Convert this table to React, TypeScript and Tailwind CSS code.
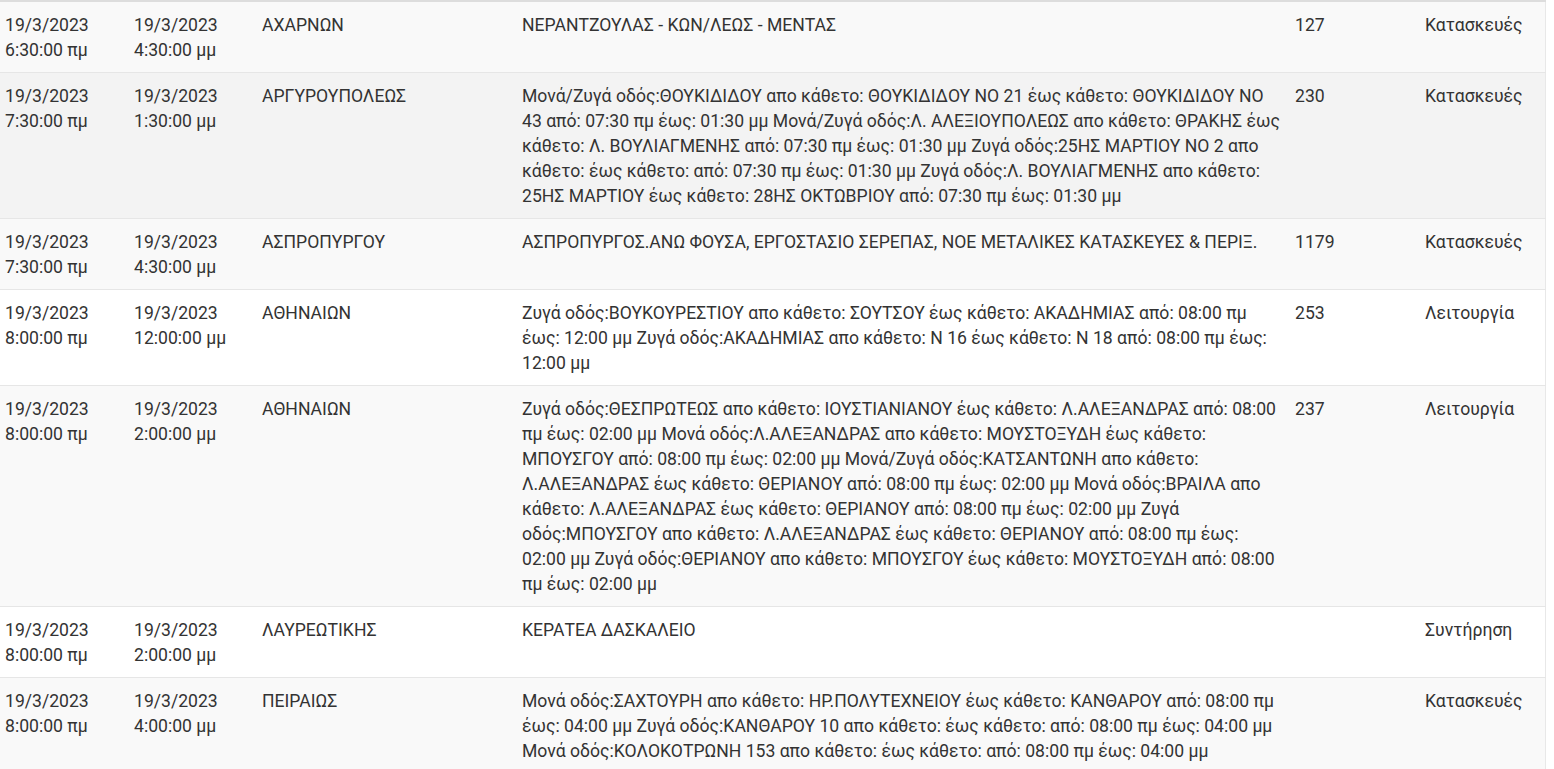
const rows = [
  {
    start: ["19/3/2023", "6:30:00 πμ"],
    end: ["19/3/2023", "4:30:00 μμ"],
    area: "ΑΧΑΡΝΩΝ",
    desc: "ΝΕΡΑΝΤΖΟΥΛΑΣ - ΚΩΝ/ΛΕΩΣ - ΜΕΝΤΑΣ",
    num: "127",
    type: "Κατασκευές",
  },
  {
    start: ["19/3/2023", "7:30:00 πμ"],
    end: ["19/3/2023", "1:30:00 μμ"],
    area: "ΑΡΓΥΡΟΥΠΟΛΕΩΣ",
    desc: "Μονά/Ζυγά οδός:ΘΟΥΚΙΔΙΔΟΥ απο κάθετο: ΘΟΥΚΙΔΙΔΟΥ ΝΟ 21 έως κάθετο: ΘΟΥΚΙΔΙΔΟΥ ΝΟ 43 από: 07:30 πμ έως: 01:30 μμ Μονά/Ζυγά οδός:Λ. ΑΛΕΞΙΟΥΠΟΛΕΩΣ απο κάθετο: ΘΡΑΚΗΣ έως κάθετο: Λ. ΒΟΥΛΙΑΓΜΕΝΗΣ από: 07:30 πμ έως: 01:30 μμ Ζυγά οδός:25ΗΣ ΜΑΡΤΙΟΥ ΝΟ 2 απο κάθετο: έως κάθετο: από: 07:30 πμ έως: 01:30 μμ Ζυγά οδός:Λ. ΒΟΥΛΙΑΓΜΕΝΗΣ απο κάθετο: 25ΗΣ ΜΑΡΤΙΟΥ έως κάθετο: 28ΗΣ ΟΚΤΩΒΡΙΟΥ από: 07:30 πμ έως: 01:30 μμ",
    num: "230",
    type: "Κατασκευές",
    hover: true,
  },
  {
    start: ["19/3/2023", "7:30:00 πμ"],
    end: ["19/3/2023", "4:30:00 μμ"],
    area: "ΑΣΠΡΟΠΥΡΓΟΥ",
    desc: "ΑΣΠΡΟΠΥΡΓΟΣ.ΑΝΩ ΦΟΥΣΑ, ΕΡΓΟΣΤΑΣΙΟ ΣΕΡΕΠΑΣ, ΝΟΕ ΜΕΤΑΛΙΚΕΣ ΚΑΤΑΣΚΕΥΕΣ & ΠΕΡΙΞ.",
    num: "1179",
    type: "Κατασκευές",
  },
  {
    start: ["19/3/2023", "8:00:00 πμ"],
    end: ["19/3/2023", "12:00:00 μμ"],
    area: "ΑΘΗΝΑΙΩΝ",
    desc: "Ζυγά οδός:ΒΟΥΚΟΥΡΕΣΤΙΟΥ απο κάθετο: ΣΟΥΤΣΟΥ έως κάθετο: ΑΚΑΔΗΜΙΑΣ από: 08:00 πμ έως: 12:00 μμ Ζυγά οδός:ΑΚΑΔΗΜΙΑΣ απο κάθετο: Ν 16 έως κάθετο: Ν 18 από: 08:00 πμ έως: 12:00 μμ",
    num: "253",
    type: "Λειτουργία",
  },
  {
    start: ["19/3/2023", "8:00:00 πμ"],
    end: ["19/3/2023", "2:00:00 μμ"],
    area: "ΑΘΗΝΑΙΩΝ",
    desc: "Ζυγά οδός:ΘΕΣΠΡΩΤΕΩΣ απο κάθετο: ΙΟΥΣΤΙΑΝΙΑΝΟΥ έως κάθετο: Λ.ΑΛΕΞΑΝΔΡΑΣ από: 08:00 πμ έως: 02:00 μμ Μονά οδός:Λ.ΑΛΕΞΑΝΔΡΑΣ απο κάθετο: ΜΟΥΣΤΟΞΥΔΗ έως κάθετο: ΜΠΟΥΣΓΟΥ από: 08:00 πμ έως: 02:00 μμ Μονά/Ζυγά οδός:ΚΑΤΣΑΝΤΩΝΗ απο κάθετο: Λ.ΑΛΕΞΑΝΔΡΑΣ έως κάθετο: ΘΕΡΙΑΝΟΥ από: 08:00 πμ έως: 02:00 μμ Μονά οδός:ΒΡΑΙΛΑ απο κάθετο: Λ.ΑΛΕΞΑΝΔΡΑΣ έως κάθετο: ΘΕΡΙΑΝΟΥ από: 08:00 πμ έως: 02:00 μμ Ζυγά οδός:ΜΠΟΥΣΓΟΥ απο κάθετο: Λ.ΑΛΕΞΑΝΔΡΑΣ έως κάθετο: ΘΕΡΙΑΝΟΥ από: 08:00 πμ έως: 02:00 μμ Ζυγά οδός:ΘΕΡΙΑΝΟΥ απο κάθετο: ΜΠΟΥΣΓΟΥ έως κάθετο: ΜΟΥΣΤΟΞΥΔΗ από: 08:00 πμ έως: 02:00 μμ",
    num: "237",
    type: "Λειτουργία",
  },
  {
    start: ["19/3/2023", "8:00:00 πμ"],
    end: ["19/3/2023", "2:00:00 μμ"],
    area: "ΛΑΥΡΕΩΤΙΚΗΣ",
    desc: "ΚΕΡΑΤΕΑ ΔΑΣΚΑΛΕΙΟ",
    num: "",
    type: "Συντήρηση",
  },
  {
    start: ["19/3/2023", "8:00:00 πμ"],
    end: ["19/3/2023", "4:00:00 μμ"],
    area: "ΠΕΙΡΑΙΩΣ",
    desc: "Μονά οδός:ΣΑΧΤΟΥΡΗ απο κάθετο: ΗΡ.ΠΟΛΥΤΕΧΝΕΙΟΥ έως κάθετο: ΚΑΝΘΑΡΟΥ από: 08:00 πμ έως: 04:00 μμ Ζυγά οδός:ΚΑΝΘΑΡΟΥ 10 απο κάθετο: έως κάθετο: από: 08:00 πμ έως: 04:00 μμ Μονά οδός:ΚΟΛΟΚΟΤΡΩΝΗ 153 απο κάθετο: έως κάθετο: από: 08:00 πμ έως: 04:00 μμ",
    num: "",
    type: "Κατασκευές",
  },
];

export default function App() {
  return (
    <div className="h-screen w-full overflow-hidden bg-white font-['Roboto',sans-serif] text-[17.6px] leading-[25px] text-[#333]">
      <table className="w-[1545px] table-fixed border-collapse border-t-2 border-r border-t-[#dddddd] border-r-[#e8e8e8]">
        <colgroup>
          <col className="w-[129px]" />
          <col className="w-[128px]" />
          <col className="w-[260px]" />
          <col className="w-[773px]" />
          <col className="w-[130px]" />
          <col className="w-[125px]" />
        </colgroup>
        <tbody>
          {rows.map((r, i) => (
            <tr
              key={i}
              className={
                r.hover
                  ? "border-b border-[#e6e6e6] bg-[#f3f3f3]"
                  : i % 2 === 0
                    ? "border-b border-[#e6e6e6] bg-[#f9f9f9]"
                    : "border-b border-[#e6e6e6] bg-white"
              }
            >
              <td className="px-[5px] pt-[11px] pb-[9px] align-top">
                {r.start[0]}
                <br />
                {r.start[1]}
              </td>
              <td className="px-[5px] pt-[11px] pb-[9px] align-top">
                {r.end[0]}
                <br />
                {r.end[1]}
              </td>
              <td className="px-[5px] pt-[11px] pb-[9px] align-top">{r.area}</td>
              <td className="px-[5px] pt-[11px] pb-[9px] align-top">{r.desc}</td>
              <td className="px-[5px] pt-[11px] pb-[9px] align-top">{r.num}</td>
              <td className="px-[5px] pt-[11px] pb-[9px] align-top">{r.type}</td>
            </tr>
          ))}
        </tbody>
      </table>
    </div>
  );
}
